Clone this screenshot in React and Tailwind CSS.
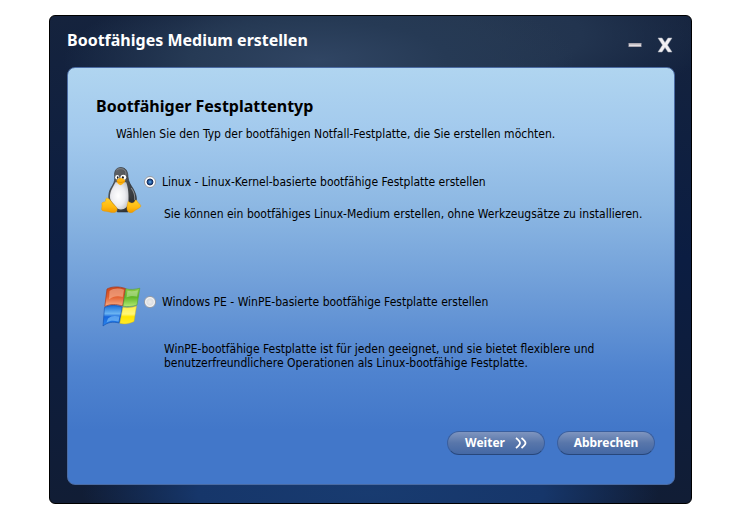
import { useState } from 'react';

function LinuxIcon() {
    return (
        <svg className="w-[42px] h-12 shrink-0" viewBox="-1 -1.5 41 47" aria-hidden="true">
            <defs>
                <linearGradient id="penguinBody" x1="0" y1="0" x2="1" y2="1">
                    <stop offset="0" stopColor="#6b6e72" />
                    <stop offset="0.5" stopColor="#4a4d51" />
                    <stop offset="1" stopColor="#222427" />
                </linearGradient>
                <radialGradient id="penguinBelly" cx="0.45" cy="0.5" r="0.6">
                    <stop offset="0" stopColor="#ffffff" />
                    <stop offset="0.6" stopColor="#ececf0" />
                    <stop offset="1" stopColor="#c4c6cc" />
                </radialGradient>
                <linearGradient id="penguinFoot" x1="0" y1="0" x2="0" y2="1">
                    <stop offset="0" stopColor="#ffd02c" />
                    <stop offset="0.6" stopColor="#ffb90f" />
                    <stop offset="1" stopColor="#f09a00" />
                </linearGradient>
            </defs>
            <path d="M19.500 0C15.500 0 13.300 2.500 13.200 6.500C13.200 10 13.800 12 12.500 15C11 18.500 8.500 21 7.800 25C7.300 28.500 7.500 31 8 33L14 40L16 43.500H26.500L28 38L34 33.500C35.500 30.500 34 25.500 31.500 21C29 17 26.700 14 26.300 9C26.200 3.500 24 0 19.500 0Z" fill="url(#penguinBody)" stroke="#2d2f33" strokeWidth="0.600" />
            <path d="M15 2.500C16.500 .8 21 .5 23 2.500C24.500 4 24.500 6 24 8" fill="none" stroke="#85888c" strokeWidth="0.900" />
            <path d="M14 14.500C12.500 18 8.500 23 8.700 29C8.800 33 12.500 35 14 38C15.500 40.500 17 41 19.500 41C23.500 41 26.500 38.500 26.800 33C27.200 26.500 26.500 19 24.500 14.500Z" fill="url(#penguinBelly)" />
            <path d="M29.500 20C32.200 23.500 33.200 28 33 32" fill="none" stroke="#8a8d91" strokeWidth="1" />
            <path d="M28 29C29 31.500 31.500 32.500 34 31.500L33.500 35C31 36.500 29 35.500 27.500 33.500Z" fill="#303338" />
            <ellipse cx="15.800" cy="9.500" rx="2" ry="2.300" fill="#ffffff" />
            <ellipse cx="21.800" cy="9.500" rx="2.800" ry="2.500" fill="#ffffff" />
            <ellipse cx="16.300" cy="9.700" rx="0.800" ry="1.200" fill="#111111" />
            <ellipse cx="21.300" cy="9.700" rx="1" ry="1.200" fill="#111111" />
            <path d="M15.200 13C16 11.300 17.500 10.200 19 10.200C20.800 10.200 22.500 11.500 23.800 12.800C23.200 14.500 21 17 19 17.300C17 17 15.200 15 15.200 13Z" fill="#ffb20e" />
            <path d="M15.500 13.500C17.500 15 21 15 23.500 13.200" fill="none" stroke="#de8900" strokeWidth="0.700" />
            <path d="M5.500 29.800C8 29.800 9 32 11 34.500C13 37 16.200 39 15.700 41.500C15 44.500 11.500 44.500 8 43.500C5 42.700 1.500 43 .7 41.500C0 40 1.300 38.500 .8 36.500C.4 34.400 1.500 33.800 3.500 33.600C5 33.300 4 30 5.500 29.800Z" fill="url(#penguinFoot)" stroke="#e39500" strokeWidth="0.400" />
            <path d="M26.500 33C25.600 36 25 39 25.500 41.500C26.300 44.700 30 44.800 32 43C34.500 40.700 38 39.800 38.700 38.300C39.300 36.500 38 36 36.500 34.700C35.400 33.700 35.200 31.500 33.500 31.800C32.500 35.500 29.500 35.500 26.500 33Z" fill="url(#penguinFoot)" stroke="#e39500" strokeWidth="0.400" />
        </svg>
    );
}

function WindowsIcon() {
    return (
        <svg className="w-[42px] h-12 shrink-0" viewBox="0 0 42 48" aria-hidden="true">
            <defs>
                <linearGradient id="paneRed" x1="0" y1="0" x2="0" y2="1">
                    <stop offset="0" stopColor="#c9451c" />
                    <stop offset="0.500" stopColor="#e2602f" />
                    <stop offset="1" stopColor="#f9b08a" />
                </linearGradient>
                <linearGradient id="paneGreen" x1="0" y1="0" x2="0" y2="1">
                    <stop offset="0" stopColor="#8fcc48" />
                    <stop offset="0.500" stopColor="#62b829" />
                    <stop offset="1" stopColor="#b2ea72" />
                </linearGradient>
                <linearGradient id="paneBlue" x1="0" y1="0" x2="0" y2="1">
                    <stop offset="0" stopColor="#1a6fd8" />
                    <stop offset="0.400" stopColor="#6bb4f2" />
                    <stop offset="0.550" stopColor="#1767dc" />
                    <stop offset="1" stopColor="#2a86ee" />
                </linearGradient>
                <linearGradient id="paneYellow" x1="0" y1="0" x2="0" y2="1">
                    <stop offset="0" stopColor="#fff04a" />
                    <stop offset="0.450" stopColor="#fff77a" />
                    <stop offset="0.600" stopColor="#ffe600" />
                    <stop offset="1" stopColor="#ffe92c" />
                </linearGradient>
            </defs>
            <path d="M7 3C12 .3 19 .3 25.500 2.500L22.700 20C16 18 10 18 4.800 20.500Z" fill="url(#paneRed)" stroke="#a8381a" strokeWidth="0.700" />
            <path d="M9.500 5C14 2 19 2 24 3.700L22.700 11C17 9.500 13 10.500 9 13.500Z" fill="#ffd5bd" fillOpacity="0.450" />
            <path d="M26 2.700C30 4 35 3.400 39.800 2.200L37 19C32 20.600 27 21 23 20.200Z" fill="url(#paneGreen)" stroke="#4c9c20" strokeWidth="0.500" />
            <path d="M27.500 4.700C31 5.500 34 5.300 38 4.200L37 10.500C33 9.500 29 10 26.500 11.500Z" fill="#ffffff" fillOpacity="0.300" />
            <path d="M4.500 21.500C10 18.800 16 19 22.300 21L19.200 37C13 35.500 8 36 3 40Z" fill="url(#paneBlue)" stroke="#104ba9" strokeWidth="0.600" />
            <path d="M8 32.500C11 29.500 15 29.500 19.500 30.500L18.500 35.500C13 34 10 34.500 6.500 36.500Z" fill="#8fd2ff" fillOpacity="0.550" />
            <path d="M22.900 21.300C27 22 32 21.800 36.500 20L34 35.500C29 38 24 38.500 19.800 37.200Z" fill="url(#paneYellow)" stroke="#dcbc00" strokeWidth="0.400" />
        </svg>
    );
}

function DiskOption({ icon, value, label, checked, onSelect, gapClass, children }) {
    return (
        <div className="flex items-start gap-0.5">
            {icon}
            <div className="flex-1 min-w-0 pt-2">
                <label className="flex items-center gap-1.5 h-4">
                    <input
                        type="radio"
                        name="diskType"
                        value={value}
                        checked={checked}
                        onChange={() => onSelect(value)}
                        className="appearance-none w-3 h-3 shrink-0 rounded-full border border-[#9a9da3] bg-[radial-gradient(circle,#ececec_0%,#dcdee1_45%,#ffffff_70%)] checked:bg-[radial-gradient(circle,#6ab8ee_0%,#2a62a8_22%,#142c5c_42%,#ffffff_54%)]"
                    />
                    {label}
                </label>
                <p className={`${gapClass} pl-5`}>{children}</p>
            </div>
        </div>
    );
}

const buttonClass =
    "flex items-center justify-center w-[98px] h-6 rounded-full border border-[#3a5f9e] border-b-[#27467a] bg-linear-to-b from-[#7f95bf] via-[#5876aa] to-[#4468a5] text-white font-bold text-xs font-['Noto_Sans','Open_Sans',sans-serif]";

export default function App() {
    const [diskType, setDiskType] = useState('linux');

    return (
        <div className="bg-white pt-[15px] pb-3.5 pl-[49px] pr-12">
            <main className="rounded-md border border-black bg-[radial-gradient(ellipse_40%_16%_at_42%_9%,#304563_0%,#263a55_50%,transparent_100%),radial-gradient(ellipse_42%_16%_at_62%_4%,#263850_0%,#22344f_50%,transparent_100%),radial-gradient(ellipse_45%_12%_at_50%_98%,#183b70_0%,#16366a_60%,transparent_100%),linear-gradient(#15233d,#0b1d42_50%,#111d35)] pl-[17px] pr-4 pb-[18px] font-['DejaVu_Sans_Condensed','DejaVu_Sans',sans-serif] text-xs leading-[14px] text-black">
                <header className="flex items-center justify-between h-[51px] text-white">
                    <h1 className="pb-1 text-base font-bold font-['Noto_Sans','Open_Sans',sans-serif]">Bootfähiges Medium erstellen</h1>
                    <div className="flex items-center gap-3.5 pt-1.5 pr-0.5">
                        <button type="button" aria-label="Minimieren">
                            <svg className="w-4 h-4" viewBox="0 0 16 16">
                                <path d="M1.500 6H14.500V10H1.500Z" fill="#a9a5ae" />
                                <path d="M2 7.500H14V9H2Z" fill="#e4e0e3" />
                            </svg>
                        </button>
                        <button type="button" aria-label="Schließen">
                            <svg className="w-4 h-4" viewBox="0 0 16 16">
                                <path d="M1 1H5L8 5.500L11 1H15L10.500 8L15 15H11L8 10.500L5 15H1L5.500 8Z" fill="#f1eff2" stroke="#a9aeba" strokeWidth="0.500" />
                            </svg>
                        </button>
                    </div>
                </header>

                <section className="rounded-lg border border-[#4a6ba3] bg-[linear-gradient(#b0d5f0_0%,#a2c9ed_16%,#8db8e3_33%,#6c9bd7_55%,#4f83cf_73%,#4277c9_87%,#4277c9_100%)] pt-[26px] pb-[29px]">
                    <h2 className="pl-7 text-base leading-6 font-bold font-['Noto_Sans','Open_Sans',sans-serif]">Bootfähiger Festplattentyp</h2>
                    <p className="mt-[9px] pl-12">Wählen Sie den Typ der bootfähigen Notfall-Festplatte, die Sie erstellen möchten.</p>

                    <div className="mt-[25px] pl-8 pr-6">
                        <DiskOption
                            icon={<LinuxIcon />}
                            value="linux"
                            label="Linux - Linux-Kernel-basierte bootfähige Festplatte erstellen"
                            checked={diskType === 'linux'}
                            onSelect={setDiskType}
                            gapClass="mt-[17px]"
                        >
                            Sie können ein bootfähiges Linux-Medium erstellen, ohne Werkzeugsätze zu installieren.
                        </DiskOption>
                    </div>

                    <div className="mt-[65px] pl-8 pr-6">
                        <DiskOption
                            icon={<WindowsIcon />}
                            value="winpe"
                            label="Windows PE - WinPE-basierte bootfähige Festplatte erstellen"
                            checked={diskType === 'winpe'}
                            onSelect={setDiskType}
                            gapClass="mt-8"
                        >
                            WinPE-bootfähige Festplatte ist für jeden geeignet, und sie bietet flexiblere und
                            benutzerfreundlichere Operationen als Linux-bootfähige Festplatte.
                        </DiskOption>
                    </div>

                    <div className="flex justify-end gap-3 mt-[61px] pr-[19px]">
                        <button type="button" className={buttonClass}>
                            <span>Weiter</span>
                            <svg className="w-3 h-3 ml-2.5" viewBox="0 0 12 12" fill="none" stroke="#ffffff" strokeWidth="1.800">
                                <path d="M1 1C3.500 3 5 4.500 5 6C5 7.500 3.500 9 1 11M6.500 1C9 3 10.500 4.500 10.500 6C10.500 7.500 9 9 6.500 11" />
                            </svg>
                        </button>
                        <button type="button" className={buttonClass}>Abbrechen</button>
                    </div>
                </section>
            </main>
        </div>
    );
}
